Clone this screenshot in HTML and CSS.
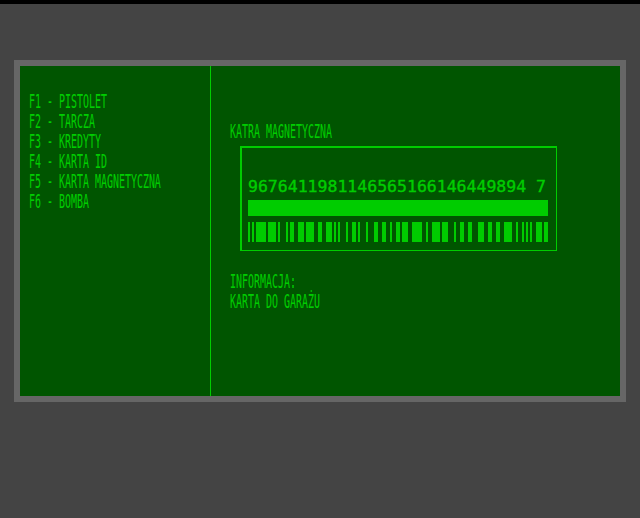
FILE: index.html
```html
<!DOCTYPE html>
<html lang="pl">
<head>
    <meta charset="UTF-8">
    <meta name="viewport" content="width=device-width, initial-scale=1.0">
    <title>Ekwipunek</title>
    <link rel="stylesheet" href="styles.css">
</head>
<body>
    <div class="top-bar"></div>
    <div class="terminal">
        <div class="item-list">
            <div class="line">F1 - PISTOLET</div>
            <div class="line">F2 - TARCZA</div>
            <div class="line">F3 - KREDYTY</div>
            <div class="line">F4 - KARTA ID</div>
            <div class="line">F5 - KARTA MAGNETYCZNA</div>
            <div class="line">F6 - BOMBA</div>
        </div>
        <div class="item-detail">
            <div class="line">KATRA MAGNETYCZNA</div>
            <div class="card">
                <div class="card-number">9676411981146565166146449894 7</div>
                <div class="stripe"></div>
                <svg class="barcode" width="300" height="20" viewBox="0 0 300 20">
                    <path fill="#00cc00" shape-rendering="crispEdges" d="M0 0h2v20h-2zM4 0h2v20h-2zM8 0h10v20h-10zM20 0h8v20h-8zM30 0h2v20h-2zM38 0h2v20h-2zM42 0h4v20h-4zM50 0h6v20h-6zM58 0h8v20h-8zM70 0h4v20h-4zM78 0h6v20h-6zM86 0h2v20h-2zM90 0h2v20h-2zM98 0h2v20h-2zM104 0h4v20h-4zM110 0h2v20h-2zM118 0h2v20h-2zM126 0h4v20h-4zM134 0h4v20h-4zM142 0h2v20h-2zM148 0h4v20h-4zM154 0h6v20h-6zM164 0h10v20h-10zM178 0h2v20h-2zM184 0h8v20h-8zM194 0h6v20h-6zM206 0h2v20h-2zM212 0h4v20h-4zM220 0h4v20h-4zM230 0h6v20h-6zM240 0h4v20h-4zM248 0h4v20h-4zM256 0h8v20h-8zM268 0h2v20h-2zM274 0h2v20h-2zM278 0h2v20h-2zM282 0h2v20h-2zM288 0h6v20h-6zM296 0h4v20h-4z"/>
                </svg>
            </div>
            <div class="info">
                <div class="line">INFORMACJA:</div>
                <div class="line">KARTA DO GARAŻU</div>
            </div>
        </div>
    </div>
</body>
</html>
```

FILE: styles.css
```css
body {
    margin: 0;
    padding: 0;
    background-color: #444444;
}
.top-bar {
    height: 4px;
    background-color: #000;
}
.terminal {
    display: flex;
    box-sizing: border-box;
    width: 612px;
    height: 342px;
    margin: 56px 0 0 14px;
    border: 6px solid #666666;
    background-color: #005500;
}
.item-list {
    box-sizing: border-box;
    width: 191px;
    padding: 25px 0 0 9px;
    border-right: 1px solid #00cc00;
}
.item-detail {
    padding: 55px 0 0 19px;
}
.line {
    height: 20px;
    font-family: "DejaVu Sans Mono", monospace;
    font-size: 19px;
    line-height: 20px;
    color: #00cc00;
    -webkit-text-stroke: 0.1px #00cc00;
    white-space: nowrap;
    transform: scaleX(0.524);
    transform-origin: left center;
}
.card {
    box-sizing: border-box;
    width: 317px;
    height: 105px;
    margin: 5px 0 0 10px;
    padding: 32px 0 0 6px;
    border: 2px solid #00cc00;
    border-right-width: 1px;
    border-bottom-width: 1px;
}
.card-number {
    height: 20px;
    font-family: "DejaVu Sans Mono", monospace;
    font-size: 16.5px;
    line-height: 14px;
    color: #00cc00;
    -webkit-text-stroke: 0.4px #00cc00;
    white-space: nowrap;
}
.stripe {
    width: 300px;
    height: 16px;
    background-color: #00cc00;
}
.barcode {
    display: block;
    margin-top: 6px;
}
.info {
    margin-top: 20px;
}
```
